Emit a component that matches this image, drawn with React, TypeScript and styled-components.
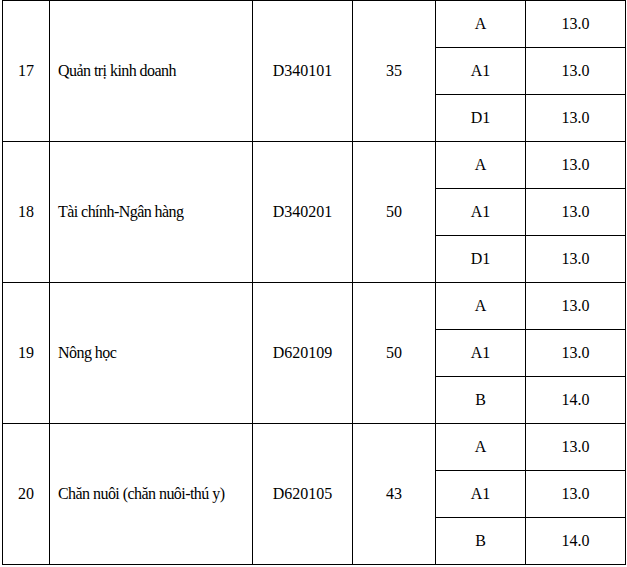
import React, { FC } from "react";
import styled, { createGlobalStyle } from "styled-components";

const GlobalStyle = createGlobalStyle`
  html, body {
    margin: 0;
    padding: 0;
    background: #ffffff;
  }
`;

type Block = {
  no: string;
  name: string;
  code: string;
  quota: string;
  scores: [string, string][];
};

const blocks: Block[] = [
  {
    no: "17",
    name: "Quản trị kinh doanh",
    code: "D340101",
    quota: "35",
    scores: [
      ["A", "13.0"],
      ["A1", "13.0"],
      ["D1", "13.0"],
    ],
  },
  {
    no: "18",
    name: "Tài chính-Ngân hàng",
    code: "D340201",
    quota: "50",
    scores: [
      ["A", "13.0"],
      ["A1", "13.0"],
      ["D1", "13.0"],
    ],
  },
  {
    no: "19",
    name: "Nông học",
    code: "D620109",
    quota: "50",
    scores: [
      ["A", "13.0"],
      ["A1", "13.0"],
      ["B", "14.0"],
    ],
  },
  {
    no: "20",
    name: "Chăn nuôi (chăn nuôi-thú y)",
    code: "D620105",
    quota: "43",
    scores: [
      ["A", "13.0"],
      ["A1", "13.0"],
      ["B", "14.0"],
    ],
  },
];

// column widths in px, left to right
const columnWidths = [47, 203, 100, 83, 90, 100];

const Page = styled.div`
  padding-left: 2px;
`;

const Table = styled.table`
  border-collapse: collapse;
  table-layout: fixed;
  width: 623px;
  font-family: "Liberation Serif", Tinos, "Times New Roman", Times, serif;
  font-size: 16px;
  color: #000;
`;

const Col = styled.col<{ $width: number }>`
  width: ${(p) => p.$width}px;
`;

const Row = styled.tr`
  height: 47px;
`;

const Cell = styled.td`
  border: 1.5px solid #000;
  padding: 0;
  text-align: center;
  vertical-align: middle;
  white-space: nowrap;
`;

const NameCell = styled(Cell)`
  padding-left: 8px;
  text-align: left;
  letter-spacing: -0.55px;
`;

const App: FC = () => (
  <Page>
    <GlobalStyle />
    <Table>
      <colgroup>
        {columnWidths.map((w, i) => (
          <Col key={i} $width={w} />
        ))}
      </colgroup>
      <tbody>
        {blocks.map((b) =>
          b.scores.map(([group, score], i) => (
            <Row key={b.no + group}>
              {i === 0 && (
                <>
                  <Cell rowSpan={3}>{b.no}</Cell>
                  <NameCell rowSpan={3}>{b.name}</NameCell>
                  <Cell rowSpan={3}>{b.code}</Cell>
                  <Cell rowSpan={3}>{b.quota}</Cell>
                </>
              )}
              <Cell>{group}</Cell>
              <Cell>{score}</Cell>
            </Row>
          ))
        )}
      </tbody>
    </Table>
  </Page>
);

export default App;
